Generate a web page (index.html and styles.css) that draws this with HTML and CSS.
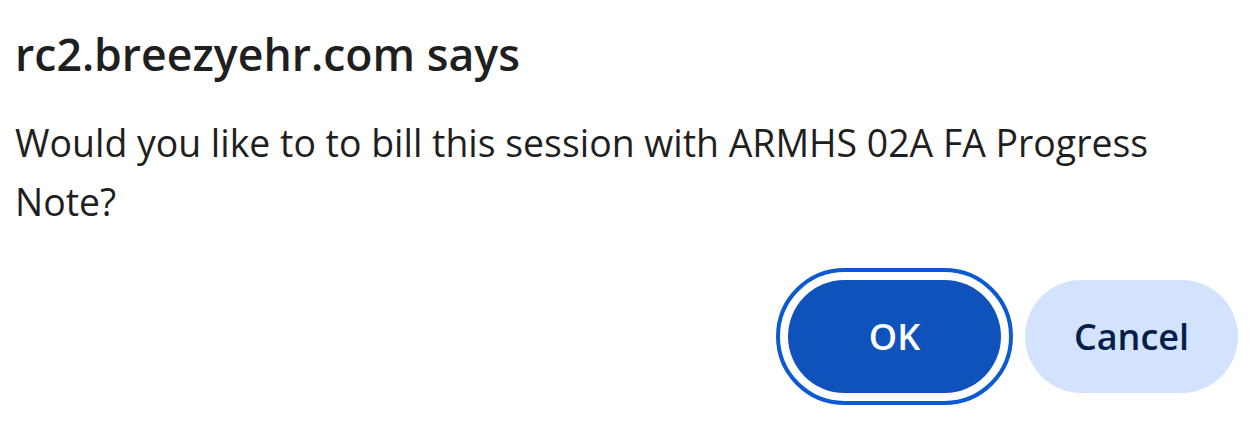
FILE: index.html
```html
<!DOCTYPE html>
<html>
<head>
<meta charset="utf-8">
<link rel="stylesheet" href="styles.css">
</head>
<body>
<div class="dialog">
  <h1 class="title">rc2.breezyehr.com says</h1>
  <p class="message">Would you like to to bill this session with ARMHS 02A FA Progress Note?</p>
  <div class="actions">
    <button class="btn btn-ok">OK</button>
    <button class="btn btn-cancel">Cancel</button>
  </div>
</div>
</body>
</html>
```

FILE: styles.css
```css
html, body {
  margin: 0;
  padding: 0;
  background: #ffffff;
}
.dialog {
  width: 1255px;
  height: 423px;
  box-sizing: border-box;
  padding: 22px 17px 0 15px;
  font-family: "Open Sans", "Noto Sans", sans-serif;
  color: #1f1f1f;
}
.title {
  margin: 0;
  font-size: 44.6px;
  font-weight: 600;
  line-height: 64px;
}
.message {
  margin: 27px 0 0 0;
  font-size: 37.4px;
  font-weight: 400;
  line-height: 59px;
}
.actions {
  display: flex;
  justify-content: flex-end;
  gap: 24px;
  margin-top: 49px;
}
.btn {
  width: 213px;
  height: 113px;
  border: none;
  border-radius: 57px;
  font-family: "Open Sans", "Noto Sans", sans-serif;
  font-size: 36px;
  font-weight: 600;
  padding: 0;
}
.btn-ok {
  background: #0f52bb;
  color: #ffffff;
  outline: 4px solid #0b5ad4;
  outline-offset: 8px;
}
.btn-cancel {
  background: #d3e3fd;
  color: #041e49;
}
```
